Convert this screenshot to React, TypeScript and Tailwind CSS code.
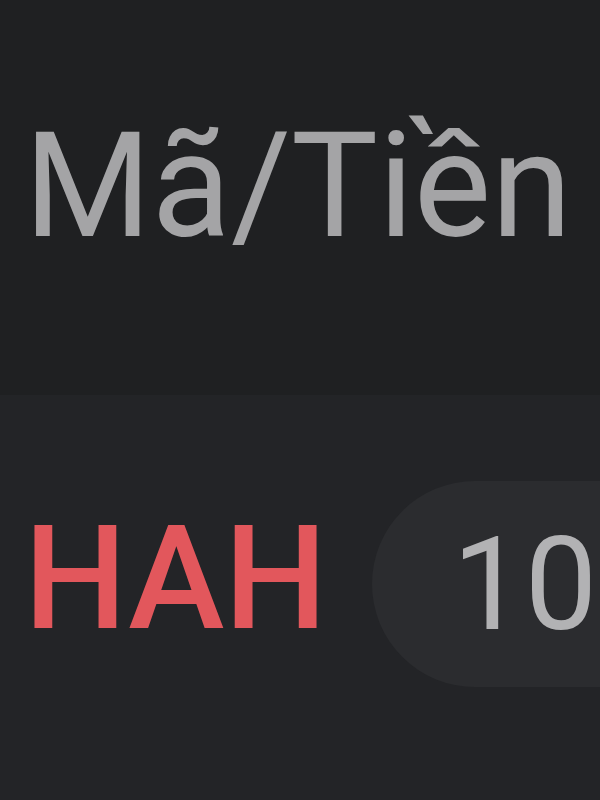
import React from "react";

export default function App() {
  return (
    <div
      className="w-[600px] h-[800px] overflow-hidden flex flex-col bg-[#1f2022]"
      style={{ fontFamily: 'Roboto, "Liberation Sans", Arial, sans-serif' }}
    >
      <div className="h-[395px] shrink-0 bg-[#1f2022] pt-[114px] pl-[24px]">
        <div className="text-[146px] leading-none text-[#a4a4a6] whitespace-nowrap">Mã/Tiền</div>
      </div>
      <div className="flex-1 bg-[#232427] pt-[86px]">
        <div className="flex items-center h-[206px] pl-[24px]">
          <div className="text-[145px] leading-none font-medium text-[#e2575c] whitespace-nowrap mb-[12px]">HAH</div>
          <div className="ml-[45px] flex-1 h-[206px] rounded-l-full bg-[#2b2c2f] flex items-center pl-[80px] overflow-hidden">
            <span className="text-[129px] leading-none text-[#b2b2b4] whitespace-nowrap">10.000</span>
          </div>
        </div>
      </div>
    </div>
  );
}
